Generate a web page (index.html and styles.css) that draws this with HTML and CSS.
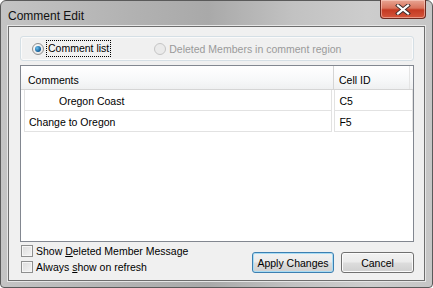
FILE: index.html
```html
<!DOCTYPE html>
<html lang="en">
<head>
  <meta charset="UTF-8" />
  <title>Comment Edit</title>
  <link rel="stylesheet" href="styles.css">
</head>
<body>
  <div class="window">
    <div class="titlebar">
      <span class="title">Comment Edit</span>
      <div class="close-btn">
        <svg width="16" height="11" viewBox="0 0 16 11">
          <path d="M3 1.5 L13 9.5 M13 1.5 L3 9.5" stroke="#3a2a2a" stroke-width="4" stroke-linecap="square"/>
          <path d="M3 1.5 L13 9.5 M13 1.5 L3 9.5" stroke="#fff" stroke-width="2.2" stroke-linecap="square"/>
        </svg>
      </div>
    </div>

    <div class="client">
      <div class="group-box">
        <label class="radio-opt">
          <span class="radio checked"></span>
          <span class="focus">Comment list</span>
        </label>
        <label class="radio-opt disabled">
          <span class="radio"></span>
          <span>Deleted Members in comment region</span>
        </label>
      </div>

      <div class="grid">
        <div class="grid-head">
          <div class="col-comment">Comments</div>
          <div class="col-cell">Cell ID</div>
        </div>
        <div class="grid-row">
          <div class="cell cell-comment indent">Oregon Coast</div>
          <div class="cell cell-id">C5</div>
        </div>
        <div class="grid-row">
          <div class="cell cell-comment">Change to Oregon</div>
          <div class="cell cell-id">F5</div>
        </div>
      </div>

      <div class="footer">
        <div class="checks">
          <label class="check-opt"><span class="checkbox"></span><span>Show <u>D</u>eleted Member Message</span></label>
          <label class="check-opt"><span class="checkbox"></span><span>Always <u>s</u>how on refresh</span></label>
        </div>
        <div class="buttons">
          <button class="btn default">Apply Changes</button>
          <button class="btn">Cancel</button>
        </div>
      </div>
    </div>
  </div>
</body>
</html>
```

FILE: styles.css
```css
* {
  margin: 0;
  padding: 0;
  box-sizing: border-box;
}

body {
  width: 433px;
  height: 288px;
  overflow: hidden;
  font-family: 'Liberation Sans', Arial, sans-serif;
  font-size: 10.5px;
  color: #000;
  background: #fff;
}

.window {
  width: 433px;
  height: 288px;
  border: 1px solid #5a5a5a;
  border-radius: 6px 6px 4px 4px;
  background: linear-gradient(to right, #c4c4c4 0%, #b2b2b2 30%, #a9a9a9 48%, #c2c2c2 68%, #cdcdcd 85%, #c6c6c6 100%);
  padding: 0 7px 6px 7px;
  display: flex;
  flex-direction: column;
}

.titlebar {
  height: 27px;
  display: flex;
  justify-content: space-between;
  align-items: flex-start;
}

.title {
  font-size: 12px;
  margin-top: 8px;
  color: #111;
}

.close-btn {
  width: 46px;
  height: 19px;
  margin-right: -1px;
  margin-top: -1px;
  border: 1px solid #6b2a20;
  border-top: none;
  border-radius: 0 0 4px 4px;
  background: linear-gradient(#e8a593 0%, #d9735c 45%, #c43a22 55%, #d4553b 100%);
  box-shadow: inset 0 0 0 1px rgba(255, 220, 210, 0.5);
  display: flex;
  align-items: center;
  justify-content: center;
}

.client {
  flex: 1;
  border: 1px solid #6e6e6e;
  background: #f0f0f0;
  padding: 9px 10px 7px 11px;
  display: flex;
  flex-direction: column;
  box-shadow: 0 0 0 1px #e6e6e6;
}

.group-box {
  height: 25px;
  border: 1px solid #d5dfe5;
  border-radius: 3px;
  display: flex;
  align-items: center;
  padding-left: 11px;
  box-shadow: inset 0 0 0 1px #fafafa;
}

.radio-opt {
  display: flex;
  align-items: center;
  gap: 3px;
}

.radio-opt.disabled {
  margin-left: 44px;
  color: #9a9a9a;
}

.radio {
  width: 12px;
  height: 12px;
  border-radius: 50%;
  border: 1px solid #8f8f8f;
  background: radial-gradient(circle at 40% 35%, #fff, #dcdcdc);
  display: inline-block;
  position: relative;
}

.radio.checked::after {
  content: '';
  position: absolute;
  left: 2px;
  top: 2px;
  width: 6px;
  height: 6px;
  border-radius: 50%;
  background: radial-gradient(circle at 35% 35%, #6cc0ee, #15609a 65%, #0b4577);
}

.disabled .radio {
  border-color: #c5c5c5;
  background: #eaeaea;
}

.focus {
  outline: 1px dotted #000;
  padding: 1px 1px 2px 1px;
}

.grid {
  margin-top: 4px;
  height: 177px;
  border: 1px solid #828790;
  background: #fff;
}

.grid-head {
  height: 24px;
  display: flex;
  background: linear-gradient(#fff 0%, #f7f8f9 60%, #eff0f1 100%);
  border-bottom: 1px solid #d5d5d5;
}

.col-comment {
  width: 313px;
  padding: 8px 0 0 7px;
  border-right: 1px solid #d5d5d5;
}

.col-cell {
  width: 76px;
  padding: 8px 0 0 5px;
  border-right: 1px solid #e5e5e5;
}

.grid-row {
  display: flex;
  margin-left: 3px;
  height: 21px;
}

.cell {
  border: 1px solid #e2e2e2;
  border-top: none;
  display: flex;
  align-items: center;
  padding-top: 2px;
}

.cell-comment {
  width: 310px;
  padding-left: 4px;
}

.cell-comment.indent {
  padding-left: 34px;
}

.cell-id {
  width: 79px;
  margin-left: 2px;
  padding-left: 4px;
}

.footer {
  flex: 1;
  display: flex;
  justify-content: space-between;
  align-items: flex-start;
}

.checks {
  display: flex;
  flex-direction: column;
  gap: 5px;
  padding-top: 3px;
}

.check-opt {
  display: flex;
  align-items: center;
  gap: 3px;
  height: 11px;
}

.checkbox {
  width: 12px;
  height: 12px;
  border: 1px solid #8e8f8f;
  background: linear-gradient(135deg, #dcdcdc, #f4f4f4);
  box-shadow: inset 0 0 0 1px #f6f6f6;
  margin-left: 1px;
}

.buttons {
  display: flex;
  gap: 7px;
  padding-top: 10px;
}

.btn {
  font-family: 'Liberation Sans', Arial, sans-serif;
  font-size: 10.5px;
  height: 21px;
  border: 1px solid #707070;
  border-radius: 3px;
  background: linear-gradient(#f2f2f2 0%, #ebebeb 48%, #dddddd 52%, #cfcfcf 100%);
  box-shadow: inset 0 0 0 1px #fbfbfb;
  color: #000;
}

.btn.default {
  width: 82px;
  border-color: #3c7fb1;
  box-shadow: inset 0 0 0 1px #a8dcf4;
}

.btn:not(.default) {
  width: 73px;
}
```
